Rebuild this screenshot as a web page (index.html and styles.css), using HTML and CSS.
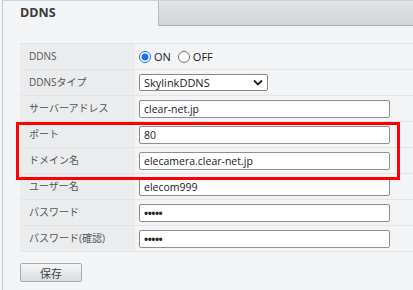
FILE: index.html
```html
<!DOCTYPE html>
<html lang="ja">
<head>
    <meta charset="UTF-8">
    <meta name="viewport" content="width=device-width, initial-scale=1.0">
    <title>DDNS</title>
    <link rel="stylesheet" href="styles.css">
</head>
<body>
    <div class="panel">
        <div class="tabs">
            <div class="tab">DDNS</div>
            <div class="tab-rest"></div>
        </div>
        <div class="content">
            <div class="form">
                <div class="row">
                    <div class="label">DDNS</div>
                    <div class="value">
                        <label class="radio"><span class="dot on"></span>ON</label>
                        <label class="radio"><span class="dot"></span>OFF</label>
                    </div>
                </div>
                <div class="row">
                    <div class="label">DDNSタイプ</div>
                    <div class="value">
                        <div class="select">SkylinkDDNS
                            <svg class="chev" width="10" height="7" viewBox="0 0 10 7"><path d="M1 1.5 L5 5.5 L9 1.5" fill="none" stroke="#222" stroke-width="1.8"/></svg>
                        </div>
                    </div>
                </div>
                <div class="row">
                    <div class="label">サーバーアドレス</div>
                    <div class="value"><div class="input">clear-net.jp</div></div>
                </div>
                <div class="row">
                    <div class="label">ポート</div>
                    <div class="value"><div class="input">80</div></div>
                </div>
                <div class="row">
                    <div class="label">ドメイン名</div>
                    <div class="value"><div class="input">elecamera.clear-net.jp</div></div>
                </div>
                <div class="row">
                    <div class="label">ユーザー名</div>
                    <div class="value"><div class="input">elecom999</div></div>
                </div>
                <div class="row">
                    <div class="label">パスワード</div>
                    <div class="value"><div class="input pass">•••••</div></div>
                </div>
                <div class="row">
                    <div class="label">パスワード(確認)</div>
                    <div class="value"><div class="input pass">•••••</div></div>
                </div>
            </div>
            <button class="save">保存</button>
        </div>
        <div class="highlight"></div>
    </div>
</body>
</html>
```

FILE: styles.css
```css
body {
    margin: 0;
    background-color: #f3f4f6;
    font-family: "Open Sans", "Noto Sans CJK JP", sans-serif;
    font-size: 11px;
    color: #333;
}

.panel {
    position: relative;
    margin-left: 2px;
    height: 290px;
    border-left: 1px solid #c8cbce;
    border-top: 1px solid #d0d3d6;
    box-sizing: border-box;
}

.tabs {
    display: flex;
    height: 25px;
}

.tab {
    width: 155px;
    padding-left: 17px;
    box-sizing: border-box;
    line-height: 24px;
    font-weight: bold;
    font-size: 12.5px;
    color: #3a3a3a;
}

.tab-rest {
    flex: 1;
    background: linear-gradient(#e2e5e8, #cfd5da);
    border-left: 1px solid #b8bdc2;
    border-bottom: 1px solid #a9aeb2;
}

.content {
    padding: 17px 0 0 17px;
}

.form {
    border-top: 1px solid #e2e4e6;
}

.row {
    display: flex;
    height: 25px;
    border-bottom: 1px solid #e2e4e6;
}

.label {
    width: 106px;
    padding-left: 9px;
    background-color: #eaecee;
    line-height: 25px;
    font-size: 10px;
    color: #555;
}

.value {
    display: flex;
    align-items: center;
    padding-left: 4px;
}

.radio {
    display: flex;
    align-items: center;
    margin-right: 7px;
    color: #222;
}

.dot {
    width: 10px;
    height: 10px;
    border: 1px solid #777;
    border-radius: 50%;
    margin-right: 3px;
    background-color: white;
}

.dot.on {
    border-color: #1a73e8;
    background: radial-gradient(circle, #1a73e8 3px, white 4px);
}

.select {
    display: flex;
    align-items: center;
    justify-content: space-between;
    width: 129px;
    height: 17px;
    padding: 0 4px;
    box-sizing: border-box;
    border: 1px solid #888;
    border-radius: 2px;
    background-color: white;
    color: #222;
}

.input {
    width: 251px;
    height: 18px;
    padding-left: 4px;
    box-sizing: border-box;
    border: 1px solid #8f8f8f;
    border-radius: 2px;
    background-color: white;
    line-height: 16px;
    font-size: 10.5px;
    color: #222;
}

.input.pass {
    font-size: 11px;
    font-weight: bold;
    letter-spacing: -0.5px;
}

.save {
    margin-top: 11px;
    width: 62px;
    height: 19px;
    border: 1px solid #a8adb2;
    border-radius: 2px;
    background: linear-gradient(#f4f5f6, #d9dde0);
    font-family: "Noto Sans CJK JP", sans-serif;
    font-size: 11px;
    color: #444;
    padding: 0;
}

.highlight {
    position: absolute;
    left: 13px;
    top: 121px;
    width: 378px;
    height: 52px;
    border: 3px solid #f00;
}
```
